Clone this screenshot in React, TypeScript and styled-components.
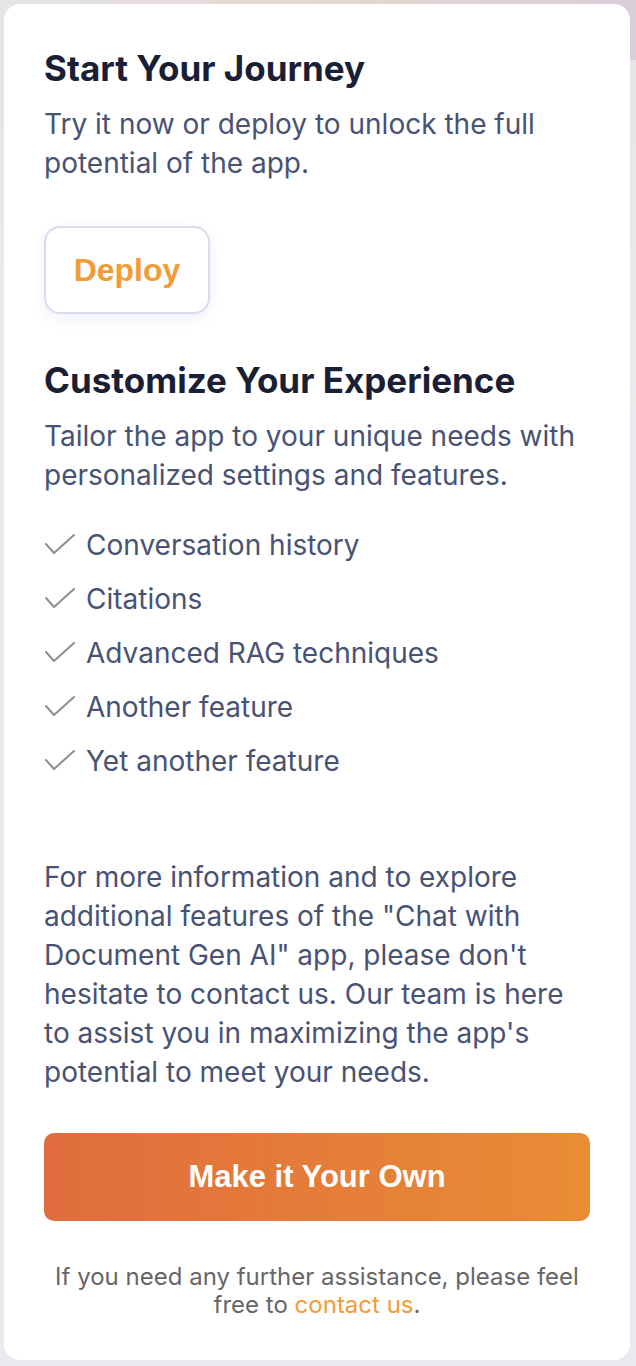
import styled, { createGlobalStyle } from 'styled-components'

const features = [
  'Conversation history',
  'Citations',
  'Advanced RAG techniques',
  'Another feature',
  'Yet another feature',
]

function App() {
  return (
    <>
      <GlobalStyle />
      <Page>
        <Card>
          <Heading>Start Your Journey</Heading>
          <Text>Try it now or deploy to unlock the full potential of the app.</Text>
          <DeployButton>Deploy</DeployButton>

          <Heading $spaced>Customize Your Experience</Heading>
          <Text>
            Tailor the app to your unique needs with personalized settings and features.
          </Text>
          <FeatureList>
            {features.map((f) => (
              <FeatureItem key={f}>
                <CheckIcon />
                <span>{f}</span>
              </FeatureItem>
            ))}
          </FeatureList>

          <Text $spaced>
            For more information and to explore additional features of the "Chat with
            Document Gen AI" app, please don't hesitate to contact us. Our team is here to
            assist you in maximizing the app's potential to meet your needs.
          </Text>

          <PrimaryButton>Make it Your Own</PrimaryButton>

          <FooterNote>
            If you need any further assistance, please feel free to{' '}
            <ContactLink href="#">contact us</ContactLink>.
          </FooterNote>
        </Card>
      </Page>
    </>
  )
}

const CheckIcon = () => (
  <CheckSvg viewBox="0 0 32 22" width="32" height="22">
    <polyline points="2,11 10,20 30,2" />
  </CheckSvg>
)

export default App

const GlobalStyle = createGlobalStyle`
  * {
    box-sizing: border-box;
  }
  body {
    margin: 0;
    font-family: Inter, "Noto Sans", sans-serif;
    background: #e9ebee;
  }
`

const Page = styled.div`
  min-height: 1366px;
  padding: 4px 6px 6px 4px;
  background:
    linear-gradient(90deg, rgba(233, 234, 236, 0) 0%, rgba(226, 208, 200, 0.7) 55%, rgba(214, 204, 216, 0.9) 100%) top / 100% 60px no-repeat,
    linear-gradient(180deg, #e6e4e6 0%, #e9ebee 30%, #e9ebee 100%);
`

const Card = styled.div`
  width: 626px;
  height: 1356px;
  background: #ffffff;
  border-radius: 16px;
  padding: 44px 40px 39px 40px;
  display: flex;
  flex-direction: column;
  align-items: flex-start;
`

const Heading = styled.h2<{ $spaced?: boolean }>`
  margin: ${(p) => (p.$spaced ? '46px' : '0')} 0 0;
  font-size: 35px;
  line-height: 40px;
  font-weight: 700;
  color: #1a1f36;
`

const Text = styled.p<{ $spaced?: boolean }>`
  margin: ${(p) => (p.$spaced ? '77px' : '17px')} 0 0;
  font-size: 28px;
  line-height: 39px;
  color: #485273;
`

const DeployButton = styled.button`
  margin-top: 43px;
  width: 166px;
  height: 88px;
  border: 2px solid #d6dcee;
  border-radius: 16px;
  background: #ffffff;
  box-shadow: 0 4px 14px rgba(120, 135, 180, 0.12);
  font-family: "Liberation Sans", Arial, sans-serif;
  font-weight: 700;
  font-size: 32px;
  color: #f29c38;
  cursor: pointer;
`

const FeatureList = styled.ul`
  list-style: none;
  margin: 31px 0 0;
  padding: 0;
  display: flex;
  flex-direction: column;
  gap: 15px;
`

const FeatureItem = styled.li`
  display: flex;
  align-items: center;
  gap: 10px;
  font-size: 28px;
  line-height: 39px;
  color: #485273;
`

const CheckSvg = styled.svg`
  flex-shrink: 0;
  margin-top: -4px;
  fill: none;
  stroke: #8e8e8e;
  stroke-width: 2;
  stroke-linecap: round;
  stroke-linejoin: round;
`

const PrimaryButton = styled.button`
  margin-top: 41px;
  width: 546px;
  height: 88px;
  border: none;
  border-radius: 10px;
  background: linear-gradient(90deg, #e06c3d 0%, #e98d35 100%);
  font-family: "Liberation Sans", Arial, sans-serif;
  font-weight: 700;
  font-size: 31px;
  color: #ffffff;
  cursor: pointer;
`

const FooterNote = styled.p`
  margin: 42px 0 0;
  width: 100%;
  text-align: center;
  font-size: 24px;
  line-height: 28px;
  color: #666666;
`

const ContactLink = styled.a`
  color: #f29c38;
  text-decoration: none;
`
